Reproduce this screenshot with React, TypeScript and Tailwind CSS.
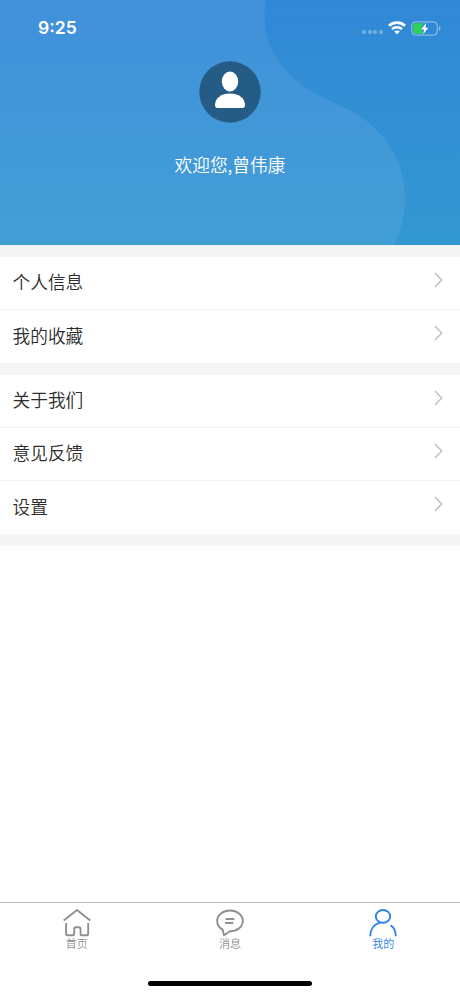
import type { ReactNode } from "react";

interface Tab {
  label: string;
  active?: boolean;
  icon: ReactNode;
}

const menuGroups: string[][] = [
  ["个人信息", "我的收藏"],
  ["关于我们", "意见反馈", "设置"],
];

const tabs: Tab[] = [
  {
    label: "首页",
    icon: (
      <>
        <path d="M1.7 12.4 15 2 28.3 12.4" />
        <path d="M4.1 15V25.4Q4.1 27.3 6 27.3H10.3Q12.2 27.3 12.2 25.4V21Q12.2 19.2 14 19.2H16.7Q18.5 19.2 18.5 21V25.4Q18.5 27.3 20.4 27.3H24.3Q26.2 27.3 26.2 25.4V15" />
      </>
    ),
  },
  {
    label: "消息",
    icon: (
      <>
        <path d="M7.6 21.6C4 19.5 2.2 16.3 2.2 12.9 2.2 7 7.8 2.5 15 2.5S27.8 7 27.8 12.9 22.2 23.3 15 23.3L9 27.3Z" />
        <path d="M10.5 11H19.4M10 15H18.3" />
      </>
    ),
  },
  {
    label: "我的",
    active: true,
    icon: (
      <>
        <ellipse cx="15" cy="8.4" rx="7.2" ry="6.4" />
        <path d="M2.2 28.2C2.2 21.5 6 16.3 12 14.6" />
        <path d="M22.6 17.2C25.9 19.3 27.8 23.3 27.8 28.2" />
      </>
    ),
  },
];

function StatusBar() {
  return (
    <div className="flex h-14 items-center justify-between pr-[19px] pl-[38px]">
      <span className="font-['Inter','Liberation_Sans',sans-serif] text-[17.5px] leading-none font-semibold">
        9:25
      </span>
      <div className="flex items-center">
        <div className="mt-2 mr-[5px] flex gap-[1.6px] opacity-30">
          <i className="size-1 rounded-[1.5px] bg-white" />
          <i className="size-1 rounded-[1.5px] bg-white" />
          <i className="size-1 rounded-[1.5px] bg-white" />
          <i className="size-1 rounded-[1.5px] bg-white" />
        </div>
        <svg className="mr-[5px] h-[14px] w-[18px]" viewBox="0 0 18 14" fill="none" stroke="white">
          <path d="M1 4.7C5.5.6 12.5.6 17 4.7" strokeWidth="2.8" />
          <path d="M4 8.1C6.8 5.6 11.2 5.6 14 8.1" strokeWidth="2.6" />
          <path d="M6.2 10.6Q9 8.6 11.8 10.6L9 13.6Z" fill="white" stroke="none" />
        </svg>
        <svg className="h-[15px] w-[30px]" viewBox="0 0 30 15">
          <rect x=".7" y=".9" width="25.6" height="13.2" rx="3.8" fill="none" stroke="white" strokeOpacity=".5" />
          <path d="M4.2 2.3H12.5L10 7.5 12.5 12.7H4.2Q2.1 12.7 2.1 10.6V4.4Q2.1 2.3 4.2 2.3Z" fill="#30d158" />
          <path d="M28 5.2Q29.5 6 29.5 7.5T28 9.8Z" fill="white" fillOpacity=".5" />
          <path d="M15.4 1.8 10 8.4H13.1L12.2 13.2 17.4 6.7H14.3Z" fill="white" />
        </svg>
      </div>
    </div>
  );
}

function Header() {
  return (
    <header className="relative h-[245px] shrink-0 overflow-hidden text-white">
      <svg className="absolute inset-0 -z-10 h-full w-full" viewBox="0 0 460 245">
        <defs>
          <linearGradient id="base" x1="0" y1="0" x2="0" y2="1">
            <stop offset="0" stopColor="#3188d7" />
            <stop offset="1" stopColor="#3398d1" />
          </linearGradient>
          <linearGradient id="wave" gradientUnits="userSpaceOnUse" x1="0" y1="0" x2="0" y2="245">
            <stop offset="0" stopColor="#4090db" />
            <stop offset="1" stopColor="#429fd5" />
          </linearGradient>
        </defs>
        <rect width="460" height="245" fill="url(#base)" />
        <path
          d="M0 0H266C261 28 268 54 290 75C310 94 332 100 355 113C384 130 405 162 405 196C405 214 401 230 394 245H0Z"
          fill="url(#wave)"
        />
      </svg>
      <StatusBar />
      <div className="flex flex-col items-center pt-[5px]">
        <svg className="size-[62px]" viewBox="0 0 62 62">
          <circle cx="31" cy="31" r="30.7" fill="#255c86" />
          <ellipse cx="31" cy="20.5" rx="8.2" ry="10" fill="white" />
          <path d="M16 44C16 37 22.5 32.4 31 32.4S46 37 46 44Q46 47 43.5 47H18.5Q16 47 16 44Z" fill="white" />
        </svg>
        <p className="mt-7 text-[17.7px] leading-[26px] font-[350]">欢迎您,曾伟康</p>
      </div>
    </header>
  );
}

function MenuRow({ label }: { label: string }) {
  return (
    <li className="flex h-[53.4px] items-center justify-between pr-[17px] pb-0.5 pl-[12.5px] last:h-[52.2px]">
      <span className="text-[17.7px] leading-none">{label}</span>
      <svg className="mb-1 h-4 w-[9px]" viewBox="0 0 9 16" fill="none" stroke="#c5c5c8" strokeWidth="1.7">
        <path d="M1 1 7.7 8 1 15" />
      </svg>
    </li>
  );
}

function TabBar() {
  return (
    <nav className="mt-auto h-[94px] shrink-0 border-t border-[#bdbdbd]">
      <div className="grid grid-cols-3">
        {tabs.map((tab) => (
          <div
            key={tab.label}
            className={`flex flex-col items-center pt-[5px] ${tab.active ? "text-[#2b82e6]" : "text-[#8f8f8f]"}`}
          >
            <svg
              className="h-[29px] w-[30px]"
              viewBox="0 0 30 29"
              fill="none"
              stroke="currentColor"
              strokeWidth="1.9"
              strokeLinejoin="round"
            >
              {tab.icon}
            </svg>
            <span className="text-[11px] leading-[13px]">{tab.label}</span>
          </div>
        ))}
      </div>
      <div className="mx-auto mt-[31px] h-[5px] w-[164px] rounded-full bg-black" />
    </nav>
  );
}

export default function App() {
  return (
    <div className="isolate flex h-screen flex-col overflow-hidden bg-white font-['Noto_Sans_CJK_SC',sans-serif] font-[350] text-[#2c2c2c]">
      <Header />
      <main>
        {menuGroups.map((group) => (
          <ul key={group[0]} className="divide-y divide-[#f2f2f2] border-t-[12px] border-[#f5f5f5]">
            {group.map((label) => (
              <MenuRow key={label} label={label} />
            ))}
          </ul>
        ))}
        <div className="h-3 bg-[#f5f5f5]" />
      </main>
      <TabBar />
    </div>
  );
}
